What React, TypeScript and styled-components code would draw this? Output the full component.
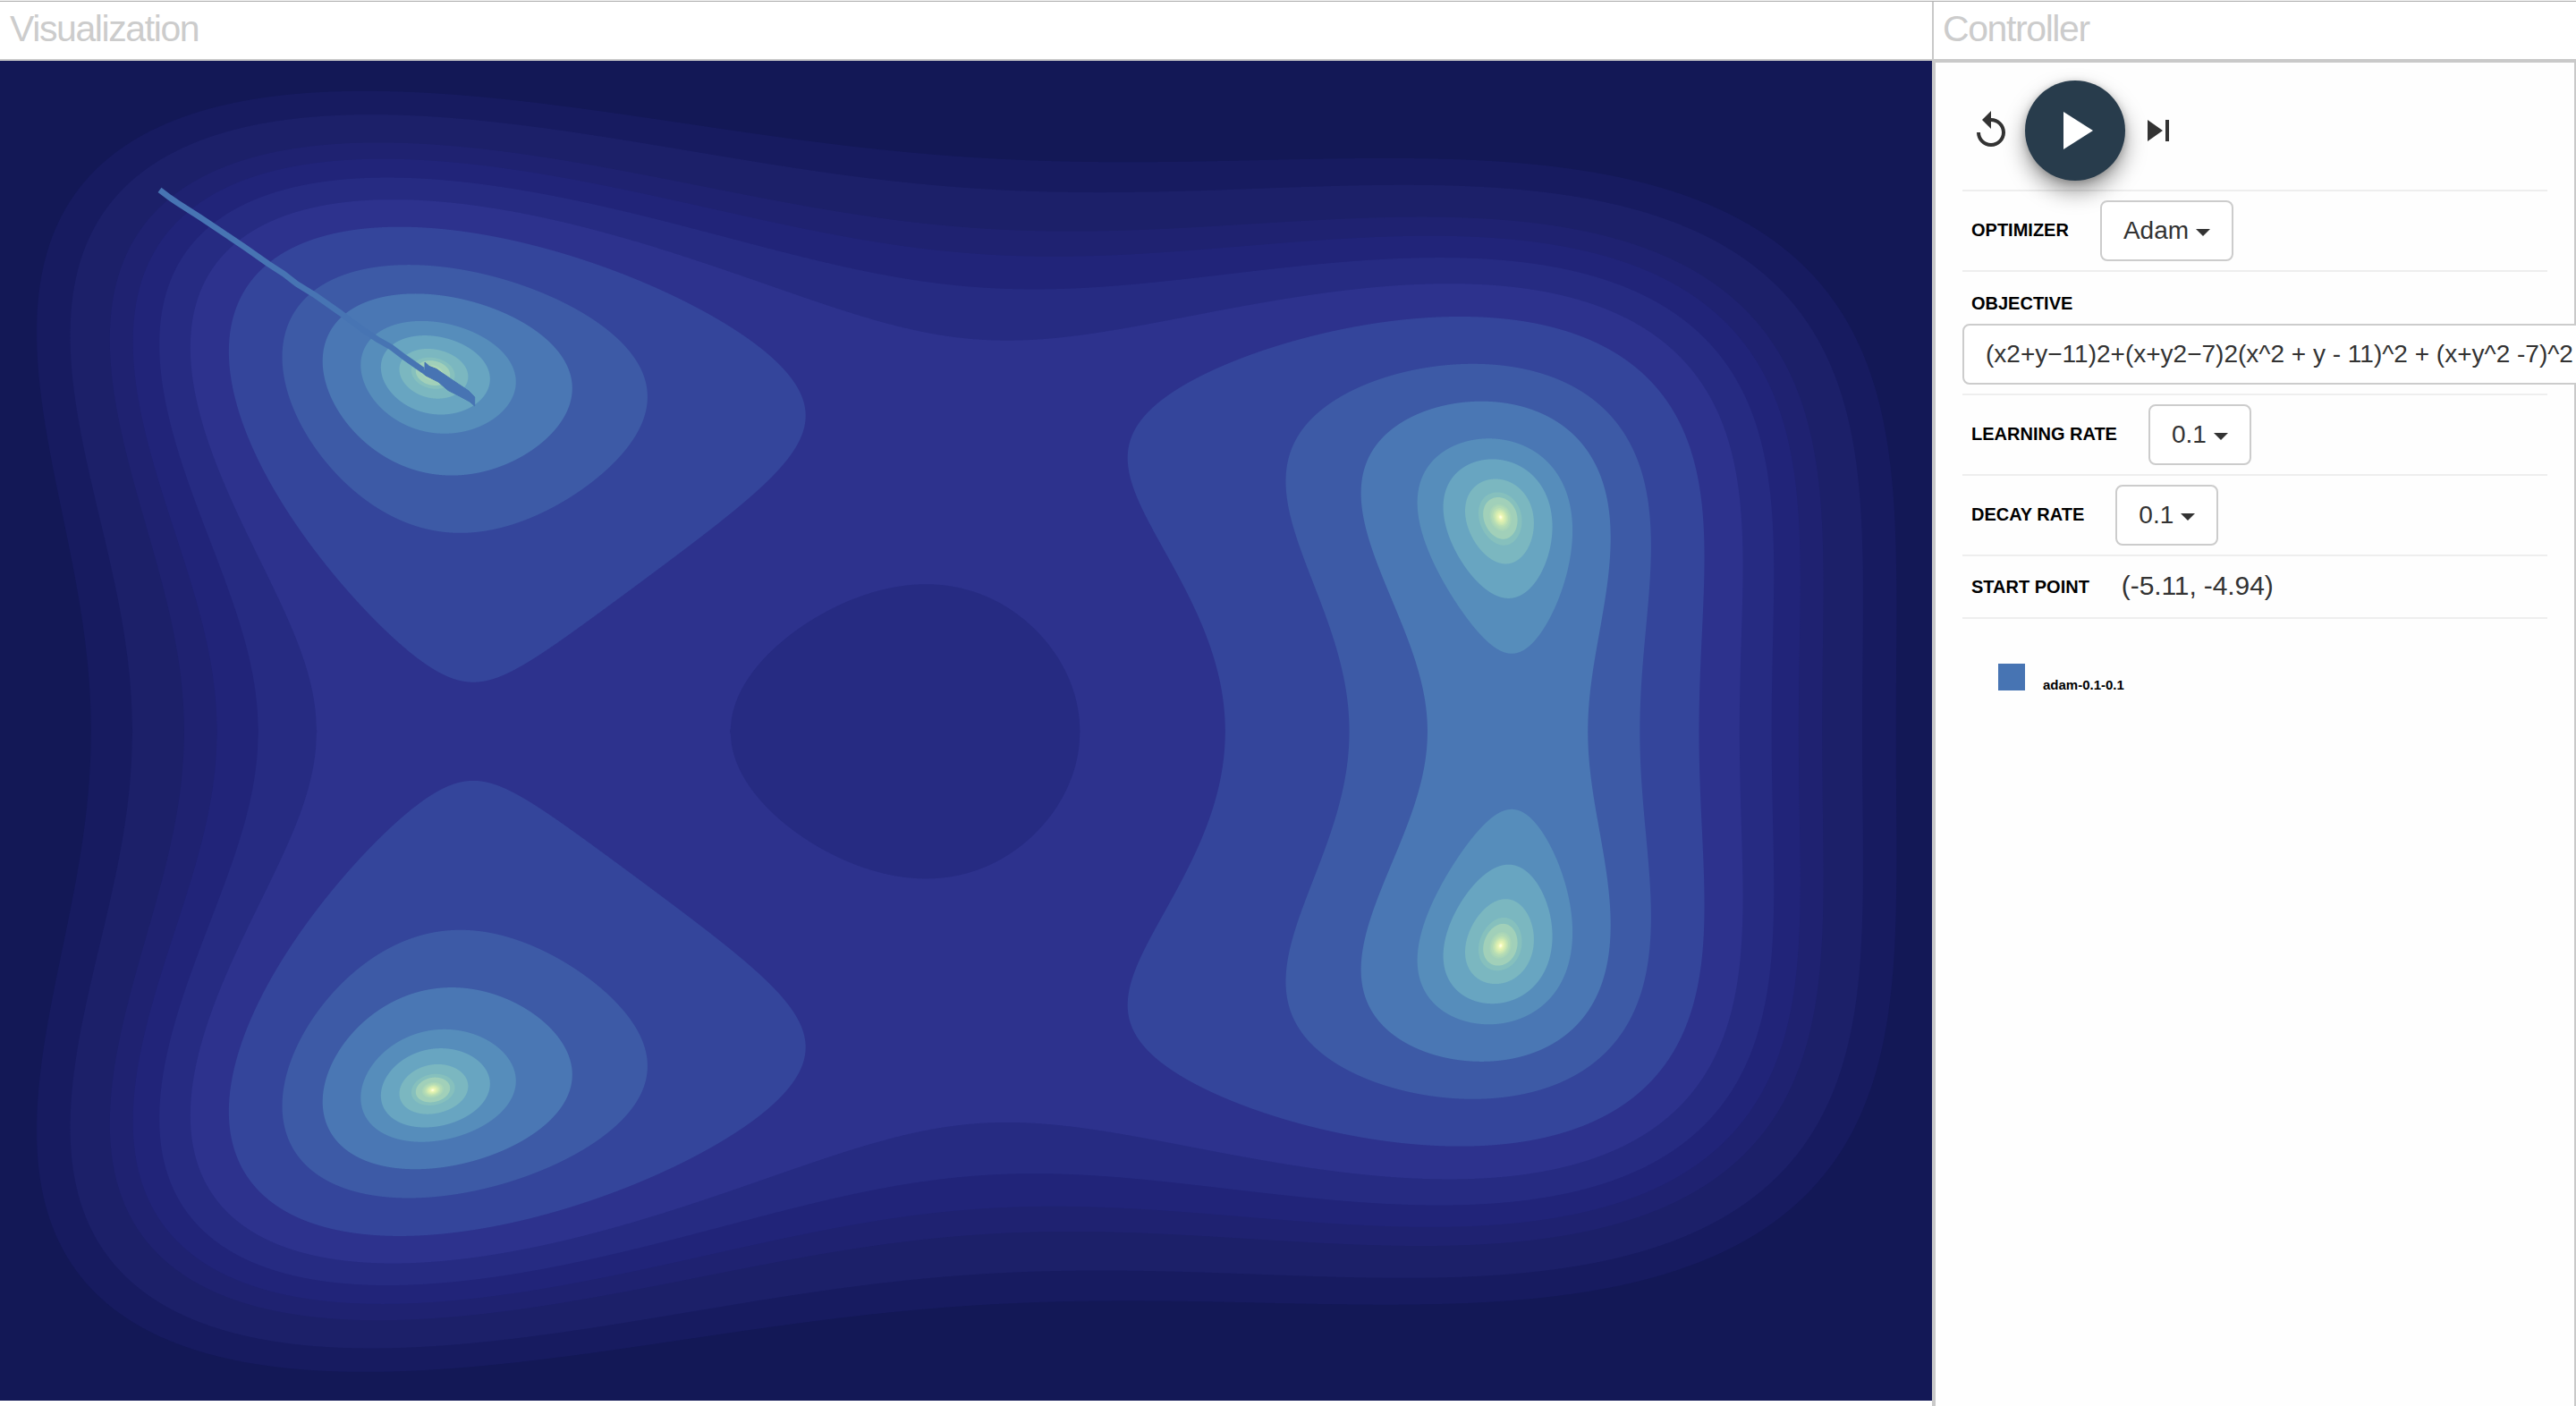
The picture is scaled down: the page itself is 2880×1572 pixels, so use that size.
import React, { useState } from 'react';
import styled, { createGlobalStyle, css } from 'styled-components';

const GlobalStyle = createGlobalStyle`
  * {
    box-sizing: border-box;
  }

  body {
    margin: 0;
    background: #fff;
    color: #333;
    font-family: 'Helvetica Neue', 'Liberation Sans', Arial, sans-serif;
  }
`;

const Page = styled.div`
  display: grid;
  grid-template-columns: 2160px 720px;
  height: 1572px;
  border-top: 1px solid #f1f1f1;
  overflow: hidden;
`;

const Column = styled.section`
  display: flex;
  flex-direction: column;
  border-top: 1px solid #b3b3b3;
`;

const Title = styled.h1<{ $divided?: boolean }>`
  flex: none;
  height: ${({ $divided }) => ($divided ? 68 : 66)}px;
  margin: 0;
  padding: 7px 0 0 11px;
  border-bottom: ${({ $divided }) => ($divided ? 4 : 2)}px solid #c9c9c9;
  color: #ccc;
  font-size: 41px;
  font-weight: 400;
  line-height: 46px;
  letter-spacing: -1.4px;

  ${({ $divided }) =>
    $divided &&
    css`
      padding-left: 10px;
      border-left: 2px solid #c9c9c9;
    `}
`;

const Plot = styled.svg`
  display: block;
  width: 2160px;
  height: 1498px;
`;

const Panel = styled.div`
  flex: 1;
  padding: 0 30px;
  border: solid #c9c9c9;
  border-width: 0 2px 0 4px;
  background: #fefefe;
`;

const Controls = styled.div`
  display: flex;
  align-items: center;
  height: 144px;
  padding: 10px 0 0 8px;
  border-bottom: 2px solid #eee;
`;

const IconButton = styled.button`
  width: 48px;
  height: 48px;
  padding: 0;
  border: 0;
  background: none;
  color: #333;

  svg {
    display: block;
    fill: currentColor;
  }
`;

const PlayButton = styled(IconButton)`
  display: flex;
  align-items: center;
  justify-content: center;
  width: 112px;
  height: 112px;
  margin: 0 13px 0 14px;
  padding-right: 2px;
  border-radius: 50%;
  background: #283c4c;
  box-shadow: 0 12px 24px rgba(0, 0, 0, 0.4), 0 2px 8px rgba(0, 0, 0, 0.2);
  color: #fff;
`;

const Field = styled.div<{ $height: number; $stacked?: boolean }>`
  display: flex;
  align-items: center;
  height: ${({ $height }) => $height}px;
  border-bottom: 2px solid #eee;

  ${({ $stacked }) =>
    $stacked &&
    css`
      flex-direction: column;
      align-items: flex-start;
      padding-top: 23px;
    `}
`;

const Label = styled.label<{ $raised?: boolean }>`
  margin: 0 35px 0 10px;
  padding-bottom: ${({ $raised }) => ($raised ? 2 : 0)}px;
  color: #000;
  font-size: 20px;
  font-weight: 700;
  line-height: 24px;
  white-space: nowrap;
`;

const Dropdown = styled.button<{ $wide?: boolean }>`
  display: flex;
  flex: none;
  align-items: center;
  height: 68px;
  padding: 0 24px;
  border: 2px solid #ccc;
  border-radius: 8px;
  background: #fff;
  color: #333;
  font-family: inherit;
  font-size: 28px;
  line-height: 40px;
  white-space: nowrap;

  ${({ $wide }) =>
    $wide &&
    css`
      margin-top: 11px;
    `}
`;

const Caret = styled.span`
  margin: 4px 0 0 8px;
  border-top: 8px solid #333;
  border-right: 8px solid transparent;
  border-left: 8px solid transparent;
`;

const Value = styled.span`
  padding: 0 0 3px 1px;
  font-size: 30px;
  line-height: 34px;
  letter-spacing: -0.1px;
`;

const Legend = styled.div`
  display: flex;
  align-items: flex-end;
  gap: 20px;
  padding: 50px 0 0 40px;
`;

const Swatch = styled.span`
  width: 30px;
  height: 30px;
  background: #4774b3;
`;

const LegendText = styled.span`
  color: #000;
  font-size: 15px;
  font-weight: 700;
  line-height: 17px;
  margin-bottom: -2px;
`;

const WIDTH = 2160;
const HEIGHT = 1498;
const STEPS = 3000;

// [threshold, fill], drawn from the highest level down
const levels: [number, string][] = [
  [500, '#171b60'],
  [400, '#1c2069'],
  [300, '#1f2271'],
  [250, '#212479'],
  [200, '#262b82'],
  [150, '#2d328d'],
  [100, '#34459b'],
  [50, '#3d5aa6'],
  [25, '#4a77b4'],
  [10, '#568dbb'],
  [5, '#68a5c1'],
  [2, '#7bb7c0'],
  [0.8, '#86c0bd'],
  [0.5, '#a1d0b9'],
  [0.2, '#a9d5b7'],
  [0.15, '#b2dab5'],
  [0.1, '#bde0b3'],
  [0.07, '#c8e6b2'],
  [0.05, '#d3ebb1'],
  [0.03, '#dff0b1'],
  [0.015, '#eaf5b5'],
  [0.006, '#f6fabf'],
  [0.002, '#fefee0'],
];

const px = (x: number) => ((x + 6) * WIDTH) / 12 + 0.7;
const py = (y: number) => ((y + 6) * HEIGHT) / 12 + 0.8;

const ring = (xs: number[], ys: number[]) => {
  const top = xs.map((x, i) => `${px(x).toFixed(2)},${py(-ys[i]).toFixed(2)}`);
  const bottom = xs.map((x, i) => `${px(x).toFixed(2)},${py(ys[i]).toFixed(2)}`).reverse();
  return `M${top.concat(bottom).join('L')}Z`;
};

// Region (x^2 - 11)^2 + (x + y^2 - 7)^2 <= level, solved for y at each x
const contour = (level: number) => {
  const root = Math.sqrt(level);
  const far = Math.sqrt(11 + root);
  const near = root < 11 ? Math.sqrt(11 - root) : 0;
  const spans = near > 0 ? [[-far, -near], [near, far]] : [[-far, far]];
  const steps = level < 1 ? 100 : STEPS;

  return spans
    .map(([from, to]) => {
      const xs = Array.from(
        { length: steps + 1 },
        (_, i) => (from + to) / 2 - ((to - from) / 2) * Math.cos((Math.PI * i) / steps)
      );
      const spread = xs.map((x) => Math.sqrt(Math.max(0, level - (x * x - 11) ** 2)));
      const outer = xs.map((x, i) => Math.sqrt(Math.max(0, 7 - x + spread[i])));
      const inner = xs.map((x, i) => Math.sqrt(Math.max(0, 7 - x - spread[i])));
      return ring(xs, outer) + ring(xs, inner);
    })
    .join('');
};

const descent =
  '178.5,144.3 190,153 198,158.5 223,174.5 247,190.5 273,208 300,227 317,238 332,249.5 353,262.5 380,281.5 390,289 407,301.5 422,311.5 437,320 453,332 473,346';
const settle =
  '475,337 480,341.5 488,344.5 495,349.5 509,359 524,369 530.7,376 530.7,386 525,381 513,374.5 501,368.5 490,359 476,352 470,347 475,345';

const ContourPlot = () => (
  <Plot viewBox={`0 0 ${WIDTH} ${HEIGHT}`}>
    <rect width={WIDTH} height={HEIGHT} fill="#131856" />
    {levels.map(([level, fill]) => (
      <path key={level} d={contour(level)} fill={fill} fillRule="evenodd" />
    ))}
    <polyline points={descent} fill="none" stroke="#4774b3" strokeWidth={6.5} />
    <polygon points={settle} fill="#4774b3" stroke="#4774b3" strokeWidth={1} />
  </Plot>
);

const fields = [
  { name: 'LEARNING RATE', value: '0.1' },
  { name: 'DECAY RATE', value: '0.1' },
];

const App = () => {
  const [playing, setPlaying] = useState<boolean>(false);

  return (
    <>
      <GlobalStyle />
      <Page>
        <Column>
          <Title>Visualization</Title>
          <ContourPlot />
        </Column>
        <Column>
          <Title $divided>Controller</Title>
          <Panel>
            <Controls>
              <IconButton>
                <svg viewBox="0 0 24 24" width="48" height="48">
                  <path d="M12 5V1L7 6l5 5V7c3.31 0 6 2.69 6 6s-2.69 6-6 6-6-2.69-6-6H4c0 4.42 3.58 8 8 8s8-3.58 8-8-3.58-8-8-8z" />
                </svg>
              </IconButton>
              <PlayButton onClick={() => setPlaying(!playing)}>
                <svg viewBox="0 0 24 24" width="72" height="72">
                  <path d={playing ? 'M6 19h4V5H6v14zm8-14v14h4V5h-4z' : 'M8 5v14l11-7z'} />
                </svg>
              </PlayButton>
              <IconButton>
                <svg viewBox="0 0 24 24" width="48" height="48">
                  <path d="M6 18l8.5-6L6 6v12zM16 6v12h2V6h-2z" />
                </svg>
              </IconButton>
            </Controls>
            <Field $height={90}>
              <Label $raised>OPTIMIZER</Label>
              <Dropdown>
                Adam
                <Caret />
              </Dropdown>
            </Field>
            <Field $height={138} $stacked>
              <Label>OBJECTIVE</Label>
              <Dropdown $wide>
                (x2+y−11)2+(x+y2−7)2(x^2 + y - 11)^2 + (x+y^2 -7)^2
                <Caret />
              </Dropdown>
            </Field>
            {fields.map(({ name, value }) => (
              <Field key={name} $height={90}>
                <Label $raised>{name}</Label>
                <Dropdown>
                  {value}
                  <Caret />
                </Dropdown>
              </Field>
            ))}
            <Field $height={70}>
              <Label>START POINT</Label>
              <Value>(-5.11, -4.94)</Value>
            </Field>
            <Legend>
              <Swatch />
              <LegendText>adam-0.1-0.1</LegendText>
            </Legend>
          </Panel>
        </Column>
      </Page>
    </>
  );
};

export default App;
